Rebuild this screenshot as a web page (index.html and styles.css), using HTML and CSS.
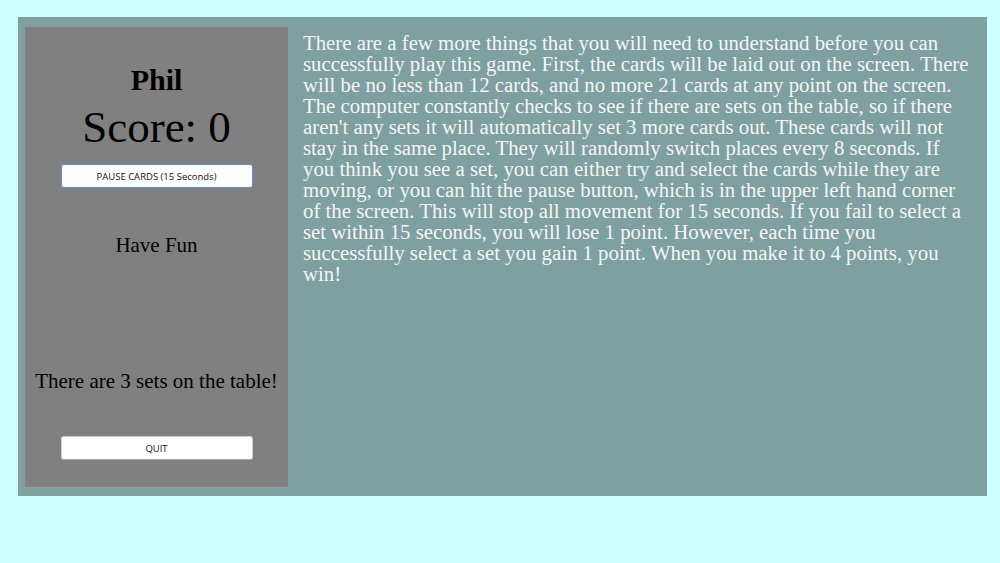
FILE: index.html
```html
<!DOCTYPE html>
<html>
<head>
<meta charset="utf-8">
<link rel="stylesheet" href="styles.css">
</head>
<body>
<div class="board">
  <aside class="side">
    <h1 class="name">Phil</h1>
    <div class="score">Score: 0</div>
    <button class="btn btn-pause">PAUSE CARDS (15 Seconds)</button>
    <div class="fun">Have Fun</div>
    <div class="sets">There are 3 sets on the table!</div>
    <button class="btn btn-quit">QUIT</button>
  </aside>
  <p class="rules">There are a few more things that you will need to understand before you can successfully play this game. First, the cards will be laid out on the screen. There will be no less than 12 cards, and no more 21 cards at any point on the screen. The computer constantly checks to see if there are sets on the table, so if there aren't any sets it will automatically set 3 more cards out. These cards will not stay in the same place. They will randomly switch places every 8 seconds. If you think you see a set, you can either try and select the cards while they are moving, or you can hit the pause button, which is in the upper left hand corner of the screen. This will stop all movement for 15 seconds. If you fail to select a set within 15 seconds, you will lose 1 point. However, each time you successfully select a set you gain 1 point. When you make it to 4 points, you win!</p>
</div>
</body>
</html>
```
FILE: styles.css
```css
html, body {
  margin: 0;
  padding: 0;
}
body {
  background: #ccffff;
  padding: 17px 0 0 18px;
  width: 1000px;
  height: 563px;
  box-sizing: border-box;
  font-family: "Liberation Serif", "Times New Roman", serif;
  overflow: hidden;
}
.board {
  width: 969px;
  height: 479px;
  box-sizing: border-box;
  background: #7fa0a0;
  display: flex;
  align-items: flex-start;
  padding: 10px 12px 9px 7px;
  gap: 15px;
}
.side {
  width: 263px;
  height: 460px;
  flex: none;
  background: #808080;
  border-bottom: 1px solid #9a9a9a;
  display: flex;
  flex-direction: column;
  align-items: center;
  color: #000;
}
.name {
  margin: 35px 0 0;
  font-size: 30px;
  line-height: 36px;
  font-weight: bold;
}
.score {
  margin-top: 4px;
  font-size: 45px;
  line-height: 50px;
}
.btn {
  width: 192px;
  height: 24px;
  box-sizing: border-box;
  background: #fff;
  border: 1px solid #cfcfcf;
  border-bottom-color: #a8a8a8;
  border-radius: 3px;
  font-family: "Open Sans", "DejaVu Sans", sans-serif;
  font-size: 9.5px;
  color: #111;
  padding: 0;
}
.btn-pause {
  margin-top: 12px;
  border-color: #5b8fd8;
}
.fun {
  margin-top: 45px;
  font-size: 21px;
  line-height: 24px;
}
.sets {
  margin-top: 112px;
  font-size: 21px;
  line-height: 24px;
}
.btn-quit {
  margin-top: 43px;
}
.rules {
  margin: 5px 0 0;
  flex: 1;
  color: #f5f5f5;
  font-size: 20.8px;
  line-height: 21px;
}
```
